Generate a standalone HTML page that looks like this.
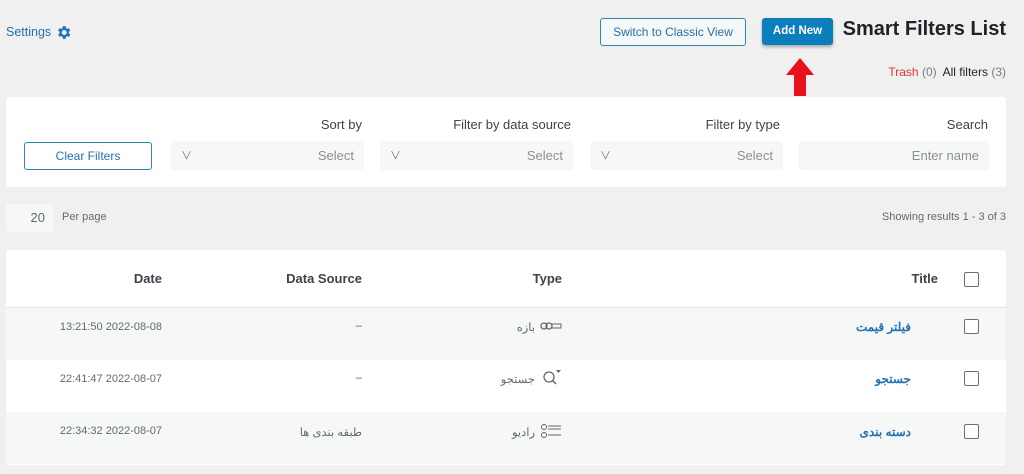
<!DOCTYPE html><html><head><meta charset="utf-8"><style>
*{box-sizing:border-box;margin:0;padding:0}
body{width:1024px;height:474px;background:#f0f0f1;font-family:"Liberation Sans","Noto Sans CJK SC",sans-serif;position:relative;overflow:hidden;color:#1d2327}
.a{position:absolute;white-space:nowrap}
.r{position:absolute;white-space:nowrap;text-align:right}
.sel{position:absolute;top:141px;height:29px;background:#f6f7f7;border-radius:3px;font-size:13px;color:#8c8f94}
.sel .v{position:absolute;left:10px;top:6px;font-size:11px;color:#777}
.sel .t{position:absolute;right:10px;top:7px}
.lbl{position:absolute;top:117px;font-size:13px;color:#3c434a;text-align:right;width:200px}
.cb{position:absolute;width:15px;height:15px;border:1.5px solid #6b6f74;border-radius:2px;left:964px;background:#fff}
.row{position:absolute;left:6px;width:1000px;height:52px}
.g{font-size:11.5px;color:#646970}
.h{font-size:13px;font-weight:bold;color:#3c434a;top:271px;width:200px}
</style></head><body>
<div class="a" style="left:6px;top:25px;font-size:12.5px;color:#2271b1">Settings</div>
<svg class="a" style="left:55px;top:24px" width="17" height="17" viewBox="0 0 24 24"><path fill="#2271b1" d="M19.4 13a7.5 7.5 0 0 0 0-2l2.1-1.6-2-3.5-2.5 1a7.6 7.6 0 0 0-1.7-1L15 3h-4l-.4 2.9a7.6 7.6 0 0 0-1.7 1l-2.5-1-2 3.5L6.6 11a7.5 7.5 0 0 0 0 2l-2.1 1.6 2 3.5 2.5-1c.5.4 1.1.8 1.7 1L11 21h4l.4-2.9c.6-.2 1.2-.6 1.7-1l2.5 1 2-3.5zM13 15.5a3.5 3.5 0 1 1 0-7 3.5 3.5 0 0 1 0 7z"/></svg>
<div class="a" style="left:600px;top:18px;width:146px;height:28px;border:1px solid #2c87b0;border-radius:3px;background:#f6f7f7;font-size:12px;color:#2271b1;text-align:center;line-height:26px">Switch to Classic View</div>
<div class="a" style="left:762px;top:18px;width:71px;height:27px;background:#0b7fbb;border-radius:3px;color:#fff;font-size:11.5px;font-weight:bold;text-align:center;line-height:27px;box-shadow:0 2px 3px rgba(0,0,0,.3)">Add New</div>
<div class="r" style="right:18px;top:18px;font-size:20px;font-weight:bold;color:#1d2327">Smart Filters List</div>
<svg class="a" style="left:786px;top:58px" width="28" height="38" viewBox="0 0 28 38"><path fill="#e8101b" d="M14 0L28 17H20V38H8V17H0Z"/></svg>
<div class="r" style="right:18px;top:65px;font-size:12px"><span style="color:#d63638">Trash</span> <span style="color:#787c82">(0)</span>&nbsp; <span style="color:#1d2327">All filters</span> <span style="color:#787c82">(3)</span></div>
<div class="a" style="left:6px;top:97px;width:1000px;height:90px;background:#fff;border-radius:3px"></div>
<div class="lbl" style="left:162px">Sort by</div>
<div class="lbl" style="left:371px">Filter by data source</div>
<div class="lbl" style="left:580px">Filter by type</div>
<div class="lbl" style="left:788px">Search</div>
<div class="a" style="left:24px;top:142px;width:128px;height:28px;border:1px solid #2c87b0;border-radius:3px;font-size:12px;color:#2271b1;text-align:center;line-height:26px">Clear Filters</div>
<div class="sel" style="left:171px;width:193px"><span class="v">&#8744;</span><span class="t">Select</span></div>
<div class="sel" style="left:380px;width:193px"><span class="v">&#8744;</span><span class="t">Select</span></div>
<div class="sel" style="left:590px;width:193px"><span class="v">&#8744;</span><span class="t">Select</span></div>
<div class="sel" style="left:798px;width:191px"><span class="t">Enter name</span></div>
<div class="a" style="left:6px;top:204px;width:47px;height:28px;background:#f6f7f7;border-radius:3px;font-size:13px;color:#646970;text-align:right;padding-right:8px;line-height:28px">20</div>
<div class="a g" style="left:62px;top:211px;font-size:11px">Per page</div>
<div class="r g" style="right:18px;top:211px;font-size:11px">Showing results 1 - 3 of 3</div>
<div class="a" style="left:6px;top:250px;width:1000px;height:215px;background:#fff;border-radius:3px"></div>
<div class="a" style="left:6px;top:307px;width:1000px;height:1px;background:#e2e4e7"></div>
<div class="row" style="top:308px;background:#f6f7f7"></div>
<div class="row" style="top:412px;background:#f6f7f7"></div>
<div class="r h" style="left:-38px">Date</div>
<div class="r h" style="left:162px">Data Source</div>
<div class="r h" style="left:362px">Type</div>
<div class="r h" style="left:738px">Title</div>
<div class="cb" style="top:272px"></div>
<div class="cb" style="top:319px"></div>
<div class="cb" style="top:371px"></div>
<div class="cb" style="top:424px"></div>
<div class="r g" style="left:-38px;width:200px;top:321px;font-size:11px">13:21:50 2022-08-08</div>
<div class="r g" style="left:-38px;width:200px;top:373px;font-size:11px">22:41:47 2022-08-07</div>
<div class="r g" style="left:-38px;width:200px;top:425px;font-size:11px">22:34:32 2022-08-07</div>
<div class="r g" style="left:162px;width:200px;top:320px">–</div>
<div class="r g" style="left:162px;width:200px;top:372px">–</div>
<div class="r g" style="left:162px;width:200px;top:425px">طبقه بندی ها</div>
<div class="r g" style="left:335px;width:200px;top:320px">بازه</div>
<div class="r g" style="left:335px;width:200px;top:372px">جستجو</div>
<div class="r g" style="left:335px;width:200px;top:425px">رادیو</div>
<svg class="a" style="left:540px;top:321px" width="22" height="10"><circle cx="4" cy="5" r="3" fill="none" stroke="#666" stroke-width="1.3"/><circle cx="9" cy="5" r="3" fill="none" stroke="#666" stroke-width="1.3"/><rect x="12" y="3" width="9" height="4" fill="none" stroke="#666"/></svg>
<svg class="a" style="left:542px;top:368px" width="22" height="18"><circle cx="7" cy="9" r="5" fill="none" stroke="#666" stroke-width="1.3"/><path d="M10.5 12.5L14 16" stroke="#666" stroke-width="1.5"/><path d="M14 2h5l-2.5 3z" fill="#666"/></svg>
<svg class="a" style="left:540px;top:423px" width="22" height="16"><circle cx="4" cy="4" r="2.5" fill="none" stroke="#666"/><circle cx="4" cy="12" r="2.5" fill="none" stroke="#666"/><path d="M8 3h13M8 6h13M8 12h13" stroke="#666"/></svg>
<div class="r" style="left:711px;width:200px;top:320px;font-size:12px;font-weight:bold;color:#2271b1">فیلتر قیمت</div>
<div class="r" style="left:711px;width:200px;top:372px;font-size:12px;font-weight:bold;color:#2271b1">جستجو</div>
<div class="r" style="left:711px;width:200px;top:425px;font-size:12px;font-weight:bold;color:#2271b1">دسته بندی</div>
</body></html>
